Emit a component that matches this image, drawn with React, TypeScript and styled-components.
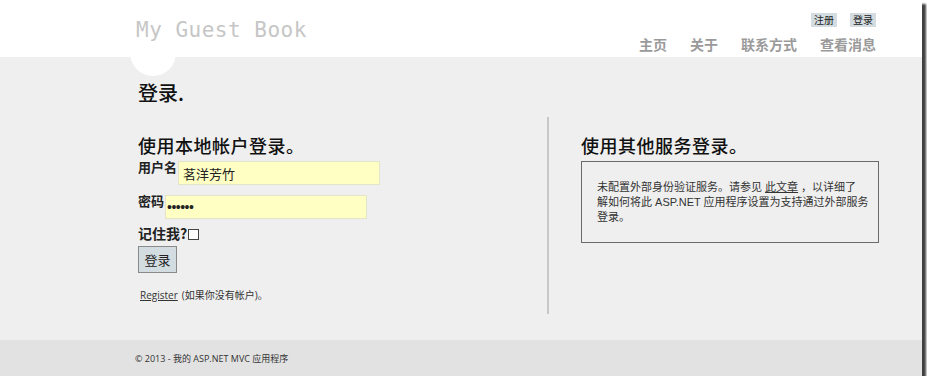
import React from "react";
import styled, { createGlobalStyle } from "styled-components";

const GlobalStyle = createGlobalStyle`
  html, body {
    margin: 0;
    padding: 0;
    background: #ffffff;
  }
  body {
    font-family: "Noto Sans CJK SC", "Liberation Sans", sans-serif;
  }
`;

const CJK = `"Noto Sans CJK SC", sans-serif`;
const LATIN = `"Open Sans", "Noto Sans CJK SC", sans-serif`;

const Frame = styled.div`
  width: 922px;
  height: 376px;
  display: flex;
  flex-direction: column;
  background: #efefef;
  box-shadow: 4px 4px 2px rgba(0, 0, 0, 0.75);
  overflow: hidden;
  position: relative;
`;

const Header = styled.header`
  height: 57px;
  flex: none;
  background: #fff;
  display: flex;
  justify-content: space-between;
  padding: 0 46px 0 136px;
  box-sizing: border-box;
  position: relative;
`;

const SiteTitle = styled.div`
  position: relative;
  z-index: 2;
  font-family: "DejaVu Sans Mono", "Liberation Mono", monospace;
  font-size: 21px;
  letter-spacing: 0.5px;
  color: #c6c6c6;
  padding-top: 17px;
  line-height: 26px;
`;

const LogoCircle = styled.div`
  position: absolute;
  left: 130px;
  top: 30px;
  width: 46px;
  height: 46px;
  border-radius: 50%;
  background: #fff;
`;

const RightHead = styled.div`
  display: flex;
  flex-direction: column;
  align-items: flex-end;
  padding-top: 13px;
`;

const LoginLinks = styled.div`
  display: flex;
  gap: 13px;
`;

const SmallLink = styled.a`
  font-family: ${CJK};
  font-size: 10px;
  line-height: 14px;
  background: #d3dce0;
  color: #222;
  padding: 0 3px;
  text-decoration: none;
`;

const Nav = styled.nav`
  display: flex;
  gap: 23px;
  margin-top: 9px;
`;

const NavLink = styled.a`
  font-family: ${CJK};
  font-size: 14px;
  font-weight: 700;
  line-height: 16px;
  color: #9a9a9a;
  text-decoration: none;
`;

const Main = styled.main`
  flex: 1;
  padding: 23px 0 0 138px;
  box-sizing: border-box;
  position: relative;
  z-index: 1;
`;

const PageTitle = styled.h1`
  margin: 0;
  font-family: ${CJK};
  font-size: 20px;
  font-weight: 500;
  line-height: 26px;
  color: #111;
`;

const Columns = styled.div`
  display: flex;
  margin-top: 11px;
`;

const LeftCol = styled.section`
  width: 411px;
  height: 197px;
  box-sizing: border-box;
  border-right: 2px solid #c8c8c8;
  padding-top: 18px;
`;

const RightCol = styled.section`
  padding: 18px 0 0 32px;
`;

const SectionTitle = styled.h2`
  margin: 0;
  font-family: ${CJK};
  font-size: 18px;
  font-weight: 500;
  line-height: 20px;
  color: #111;
  letter-spacing: 0.5px;
`;

const FieldRow = styled.div<{ $top: number }>`
  display: flex;
  align-items: flex-start;
  margin-top: ${(p) => p.$top}px;
`;

const Label = styled.label`
  font-family: ${CJK};
  font-size: 13px;
  font-weight: 700;
  line-height: 16px;
  color: #222;
`;

const TextInput = styled.input`
  width: 202px;
  height: 24px;
  box-sizing: border-box;
  background: #ffffc3;
  border: 1px solid #e4e4c8;
  margin: 2px 0 0 1px;
  padding: 0 4px;
  font-family: ${CJK};
  font-size: 13px;
  color: #222;
  outline: none;

  &[type="password"] {
    font-family: "Liberation Sans", sans-serif;
    font-size: 14px;
    padding: 0 1px;
    letter-spacing: -0.5px;
  }
`;

const RememberRow = styled.div`
  display: flex;
  align-items: center;
  margin-top: 5px;
  font-family: ${CJK};
  font-size: 14px;
  font-weight: 700;
  color: #222;
  line-height: 18px;
`;

const Check = styled.span`
  width: 9px;
  height: 9px;
  border: 1px solid #444;
  background: #fff;
  margin-left: 1px;
  margin-top: 2px;
`;

const SubmitButton = styled.button`
  margin-top: 4px;
  width: 39px;
  height: 27px;
  background: #d3dce0;
  border: 1px solid #8a8a8a;
  font-family: ${CJK};
  font-size: 13px;
  color: #222;
  padding: 0;
`;

const RegisterLine = styled.p`
  margin: 15px 0 0 2px;
  font-family: ${LATIN};
  font-size: 10px;
  line-height: 14px;
  color: #333;
`;

const Underlined = styled.a<{ $gap?: number }>`
  color: #333;
  text-decoration: underline;
  margin-right: ${(p) => p.$gap ?? 0}px;
`;

const InfoBox = styled.div`
  margin-top: 6px;
  width: 298px;
  height: 82px;
  box-sizing: border-box;
  border: 1px solid #6a6a6a;
  padding: 18px 9px 0 15px;
  font-family: "Liberation Sans", "Noto Sans CJK SC", sans-serif;
  font-size: 11px;
  line-height: 15px;
  color: #333;
`;

const Footer = styled.footer`
  height: 36px;
  flex: none;
  background: #e2e2e2;
  display: flex;
  align-items: center;
  padding-left: 135px;
  font-family: ${LATIN};
  font-size: 9px;
  color: #333;
`;

export default function App() {
  return (
    <>
      <GlobalStyle />
      <Frame>
        <Header>
          <SiteTitle>My Guest Book</SiteTitle>
          <LogoCircle />
          <RightHead>
            <LoginLinks>
              <SmallLink>注册</SmallLink>
              <SmallLink>登录</SmallLink>
            </LoginLinks>
            <Nav>
              <NavLink>主页</NavLink>
              <NavLink>关于</NavLink>
              <NavLink>联系方式</NavLink>
              <NavLink>查看消息</NavLink>
            </Nav>
          </RightHead>
        </Header>
        <Main>
          <PageTitle>登录.</PageTitle>
          <Columns>
            <LeftCol>
              <SectionTitle>使用本地帐户登录。</SectionTitle>
              <FieldRow $top={4}>
                <Label>用户名</Label>
                <TextInput defaultValue="茗洋芳竹" />
              </FieldRow>
              <FieldRow $top={8}>
                <Label>密码</Label>
                <TextInput type="password" defaultValue="123456" />
              </FieldRow>
              <RememberRow>
                记住我?<Check />
              </RememberRow>
              <SubmitButton>登录</SubmitButton>
              <RegisterLine>
                <Underlined $gap={4}>Register</Underlined>(如果你没有帐户)。
              </RegisterLine>
            </LeftCol>
            <RightCol>
              <SectionTitle>使用其他服务登录。</SectionTitle>
              <InfoBox>
                未配置外部身份验证服务。请参见 <Underlined>此文章</Underlined> ，以详细了
                <br />
                解如何将此 ASP.NET 应用程序设置为支持通过外部服务
                <br />
                登录。
              </InfoBox>
            </RightCol>
          </Columns>
        </Main>
        <Footer>© 2013 - 我的 ASP.NET MVC 应用程序</Footer>
      </Frame>
    </>
  );
}
